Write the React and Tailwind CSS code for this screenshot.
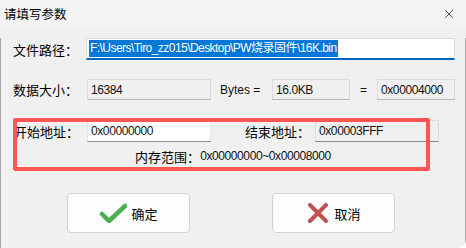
import { X } from 'lucide-react';

const cjk = { fontFamily: '"Noto Sans CJK SC", "Liberation Sans", sans-serif' };
const latin = { fontFamily: '"Liberation Sans", "Noto Sans CJK SC", sans-serif' };

function Label({ children, className = '' }) {
  return (
    <span className={`text-[13px] leading-none text-black ${className}`} style={cjk}>
      {children}
    </span>
  );
}

function ReadBox({ value, className = '' }) {
  return (
    <div
      className={`flex h-[21px] items-center border border-[#dcdcdc] border-b-[#b8b8b8] bg-[#f0f0f0] pl-[3px] text-[12px] tracking-[-0.4px] text-[#111] ${className}`}
      style={latin}
    >
      {value}
    </div>
  );
}

function Button({ icon, text }) {
  return (
    <button className="flex h-[40px] w-[123px] items-center justify-center gap-[4px] rounded-[4px] border border-[#d2d2d2] bg-[#fdfdfd]">
      {icon}
      <span className="text-[13px] leading-none text-black" style={cjk}>{text}</span>
    </button>
  );
}

export default function App() {
  return (
    <div className="relative h-[248px] w-[466px] overflow-hidden rounded-br-[8px] bg-[#f0f0f0]" style={cjk}>
      {/* title bar */}
      <div className="flex h-[28px] items-center justify-between bg-[#f3f3f3] pl-[4px] pr-[10px]">
        <span className="text-[12.5px] leading-none text-black" style={cjk}>请填写参数</span>
        <X size={14} strokeWidth={1.2} className="text-black" />
      </div>

      <div className="h-[220px] border-b border-l border-r border-[#a8a8a8]">
        {/* file path */}
        <div className="mt-[10px] flex items-center pl-[12px]">
          <Label className="w-[73px]">文件路径：</Label>
          <div className="flex h-[22px] w-[369px] items-center border border-[#dcdcdc] border-b-2 border-b-[#0067c0] bg-white pl-[2px]">
            <span
              className="bg-[#0078d7] px-[1px] text-[12px] leading-[17px] tracking-[-0.55px] text-white"
              style={latin}
            >
              F:\Users\Tiro_zz015\Desktop\PW烧录固件\16K.bin
            </span>
          </div>
        </div>

        {/* data size */}
        <div className="mt-[19px] flex items-center pl-[12px]">
          <Label className="w-[74px]">数据大小：</Label>
          <ReadBox value="16384" className="w-[124px]" />
          <span className="ml-[9px] w-[52px] text-[12px] text-[#111]" style={latin}>Bytes =</span>
          <ReadBox value="16.0KB" className="w-[78px]" />
          <span className="w-[27px] pl-[10px] text-[12px] text-[#111]" style={latin}>=</span>
          <ReadBox value="0x00004000" className="w-[78px]" />
        </div>

        {/* address range */}
        <div className="mt-[20px] flex items-center pl-[13px]">
          <Label className="w-[73px]">开始地址：</Label>
          <div
            className="flex h-[22px] w-[124px] items-center border border-[#e6e6e6] border-b-[#8c8c8c] bg-white pl-[3px] text-[12px] tracking-[-0.4px] text-[#111]"
            style={latin}
          >
            0x00000000
          </div>
          <Label className="ml-[34px] w-[70px]">结束地址：</Label>
          <div
            className="flex h-[22px] w-[124px] items-center border border-[#dcdcdc] border-b-[#8c8c8c] bg-[#f0f0f0] pl-[3px] text-[12px] tracking-[-0.4px] text-[#111]"
            style={latin}
          >
            0x00003FFF
          </div>
        </div>

        <div className="mt-[8px] flex justify-center">
          <Label>内存范围：</Label>
          <span className="text-[12px] leading-none tracking-[-0.4px] text-[#111]" style={latin}>
            0x00000000~0x00008000
          </span>
        </div>

        {/* buttons */}
        <div className="mt-[30px] flex gap-[82px] pl-[66px]">
          <Button
            text="确定"
            icon={
              <svg width="28" height="20" viewBox="0 0 28 20">
                <path d="M3 11 L10 18 L26 3" fill="none" stroke="#4caf50" strokeWidth="4.5" strokeLinecap="round" strokeLinejoin="round" />
              </svg>
            }
          />
          <Button
            text="取消"
            icon={
              <svg width="24" height="20" viewBox="0 0 24 20">
                <path d="M4 2 L20 18 M20 2 L4 18" fill="none" stroke="#c4504e" strokeWidth="4" strokeLinecap="round" />
              </svg>
            }
          />
        </div>
      </div>

      {/* red annotation frame */}
      <div className="pointer-events-none absolute left-[13px] top-[118px] h-[53px] w-[417px] rounded-[2px] border-4 border-[#fd5454]" />
    </div>
  );
}
